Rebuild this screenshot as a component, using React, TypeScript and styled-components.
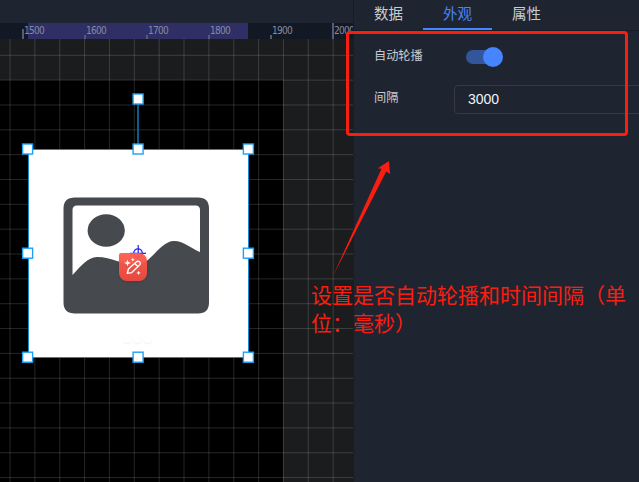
import React from "react";
import styled, { createGlobalStyle } from "styled-components";

const GlobalStyle = createGlobalStyle`
  * { box-sizing: border-box; }
  body { margin: 0; background: #1f2530; overflow: hidden; }
`;

const sans = `"Liberation Sans", "Noto Sans CJK SC", sans-serif`;

const Page = styled.div`
  position: relative;
  display: flex;
  width: 639px;
  height: 482px;
  overflow: hidden;
  background: #1f2530;
  font-family: ${sans};
`;

const Editor = styled.main`
  display: flex;
  flex-direction: column;
  width: 353px;
  flex: none;
`;

const TopBar = styled.div`
  height: 23px;
  flex: none;
  background: #1f2530;
`;

const Ruler = styled.div`
  display: flex;
  height: 16px;
  flex: none;
  padding-left: 22px;
  overflow: hidden;
  background: linear-gradient(90deg, #121924 28px, #2f2f66 28px, #2f2f66 248.5px, #121924 248.5px);
`;

const RulerMark = styled.div<{ $tick: number }>`
  flex: none;
  width: 62px;
  height: 16px;
  padding: 3px 0 0 2px;
  font: 10px/10px "DejaVu Sans Condensed", "DejaVu Sans", sans-serif;
  letter-spacing: -0.7px;
  color: #858aa0;
  background: linear-gradient(#555b70, #555b70) left bottom / 2px ${(p) => p.$tick}px no-repeat;
`;

const Canvas = styled.div`
  position: relative;
  flex: 1;
  overflow: hidden;
  background: #1b1c1d;
`;

const Stage = styled.div`
  position: absolute;
  left: 0;
  top: 41px;
  width: 283px;
  bottom: 0;
  background: #000;
`;

const Drawing = styled.svg`
  position: absolute;
  left: 0;
  top: 0;
  display: block;
`;

const Node = styled.div`
  position: absolute;
  left: 28px;
  top: 110px;
  width: 221px;
  height: 209px;
  background: #fff;
  border: 1px solid #168bd0;
`;

const Stem = styled.i`
  position: absolute;
  left: 137px;
  top: 65px;
  width: 2px;
  height: 41px;
  background: #075c91;
`;

const Badge = styled.div`
  position: absolute;
  left: 119px;
  top: 214px;
  width: 28px;
  height: 28px;
  border-radius: 2px 8px 8px 8px;
  background: linear-gradient(rgba(255, 92, 76, 0.94), #e84840);
  box-shadow: 0 1px 3px rgba(0, 0, 0, 0.12);
`;

const Dots = styled.div`
  position: absolute;
  left: 124px;
  top: 297px;
  display: flex;
  gap: 3px;
`;

const Dot = styled.i`
  width: 7px;
  height: 7px;
  border-radius: 50%;
  background: #fff;
  box-shadow: 0 1px 2px rgba(0, 0, 0, 0.07);
`;

const Panel = styled.aside`
  flex: 1;
  min-width: 0;
  border-left: 1px solid #171c26;
  background: #1f2530;
`;

const Tabs = styled.nav`
  display: flex;
  height: 31px;
  border-bottom: 1px solid #171b24;
`;

const Tab = styled.div<{ $active?: boolean }>`
  width: 69px;
  height: 30px;
  padding-top: 4px;
  font-size: 14.5px;
  line-height: 20px;
  text-align: center;
  color: ${(p) => (p.$active ? "#4784ff" : "#c6cbd5")};
  border-bottom: 2px solid ${(p) => (p.$active ? "#4784ff" : "transparent")};
`;

const Form = styled.div`
  display: flex;
  flex-direction: column;
  gap: 12px;
  padding: 11px 0 0 20px;
`;

const Row = styled.div`
  display: flex;
  align-items: center;
  height: 30px;
`;

const Label = styled.label`
  flex: none;
  width: 80px;
  padding-bottom: 2px;
  font-size: 12.2px;
  line-height: 18px;
  color: #c6cbd5;
`;

const Switch = styled.div`
  display: flex;
  align-items: center;
  justify-content: flex-end;
  width: 36px;
  height: 14px;
  margin-left: 12px;
  border-radius: 7px;
  background: #33559b;
`;

const Knob = styled.span`
  flex: none;
  width: 20px;
  height: 20px;
  margin-right: -1px;
  border-radius: 50%;
  background: #4784ff;
`;

const Field = styled.div`
  flex: none;
  width: 210px;
  height: 29px;
  padding-left: 13px;
  border: 1px solid #343943;
  border-radius: 4px;
  font-size: 14px;
  line-height: 26px;
  color: #f0f2f5;
`;

const Frame = styled.div`
  position: absolute;
  left: 346px;
  top: 31px;
  width: 282px;
  height: 105px;
  border: 3px solid #fa1e10;
  border-radius: 4px;
`;

const Note = styled.div`
  position: absolute;
  left: 311px;
  top: 280px;
  width: 328px;
  font: 400 21px/28px "Noto Sans CJK SC", sans-serif;
  color: #fa1e10;
  white-space: nowrap;
`;

const marks = [
  { value: 1500, tick: 10 },
  { value: 1600, tick: 4 },
  { value: 1700, tick: 4 },
  { value: 1800, tick: 4 },
  { value: 1900, tick: 4 },
  { value: 2000, tick: 16 },
];

const handles = [
  [138.1, 60],
  [27.6, 110], [138.1, 110], [248.4, 110],
  [27.6, 214.2], [248.4, 214.2],
  [27.6, 318.2], [138.1, 318.2], [248.4, 318.2],
];

const columns = Array.from({ length: 14 }, (_, i) => 10 + i * 24.86);
const rows = Array.from({ length: 18 }, (_, i) => 16.3 + i * 24.84);

export default function App() {
  return (
    <Page>
      <GlobalStyle />
      <Editor>
        <TopBar />
        <Ruler>
          {marks.map((m) => (
            <RulerMark key={m.value} $tick={m.tick}>{m.value}</RulerMark>
          ))}
        </Ruler>
        <Canvas>
          <Stage />
          <Drawing width="353" height="443" stroke="#fff" strokeOpacity=".15">
            {columns.map((x) => <path key={x} d={`M${x} 0V443`} />)}
            {rows.map((y) => <path key={y} d={`M0 ${y}H353`} />)}
          </Drawing>
          <Node />
          <Drawing width="353" height="443" viewBox="0 39 353 443">
            <path
              fill="#46494d"
              fillRule="evenodd"
              d="M75 197.5H198Q209 197.5 209 208.5V302.5Q209 313.5 198 313.5H75Q63.5 313.5 63.5 302.5V208.5Q63.5 197.5 75 197.5ZM77 205.5Q72.5 205.5 72.5 210V275C80 267 88 257 97 257C112 257 122 265 137 265C150 265 160 241 174 241C184 241 192 249 200 252V210Q200 205.5 195.5 205.5Z"
            />
            <ellipse cx="106.2" cy="230.5" rx="18.6" ry="16.3" fill="#46494d" />
            <g fill="none" stroke="#2020ef" strokeWidth="1.2">
              <circle cx="138" cy="253" r="4.2" />
              <path d="M130 253.3H146M138.2 245V260" />
            </g>
          </Drawing>
          <Badge>
            <svg width="28" height="28" viewBox="0 0 28 28" fill="none" stroke="#fff" strokeWidth="1.4" strokeLinejoin="round">
              <path d="M8.3 20.4L9.4 16L17.3 8.9A2.2 2.2 0 0 1 20.6 12L12.8 19.6Z M15.7 10.5L18.8 13.6" />
              <path fill="#fff" stroke="none" d="M8.5 6.7L9.4 9.1L11.8 10L9.4 10.9L8.5 13.3L7.6 10.9L5.2 10L7.6 9.1ZM13.8 4.6L14.4 6.1L15.9 6.7L14.4 7.3L13.8 8.8L13.2 7.3L11.7 6.7L13.2 6.1ZM19.6 17.6L20.2 19.3L21.9 19.9L20.2 20.5L19.6 22.2L19 20.5L17.3 19.9L19 19.3Z" />
            </svg>
          </Badge>
          <Dots><Dot /><Dot /><Dot /></Dots>
          <Stem />
          <Drawing width="353" height="443" fill="#fff" stroke="#1fa0f5" strokeWidth="1.4">
            {handles.map(([x, y]) => (
              <rect key={`${x}-${y}`} x={x - 5} y={y - 5} width="10" height="10" />
            ))}
          </Drawing>
        </Canvas>
      </Editor>
      <Panel>
        <Tabs>
          <Tab>数据</Tab>
          <Tab $active>外观</Tab>
          <Tab>属性</Tab>
        </Tabs>
        <Form>
          <Row>
            <Label>自动轮播</Label>
            <Switch><Knob /></Switch>
          </Row>
          <Row>
            <Label>间隔</Label>
            <Field>3000</Field>
          </Row>
        </Form>
      </Panel>
      <Frame />
      <Drawing width="639" height="482">
        <path d="M333 276L381.5 168.8L378 168.3L389 161L390 174L386.2 171.5Z" fill="#fa1e10" />
      </Drawing>
      <Note>设置是否自动轮播和时间间隔（单<br />位：毫秒）</Note>
    </Page>
  );
}
